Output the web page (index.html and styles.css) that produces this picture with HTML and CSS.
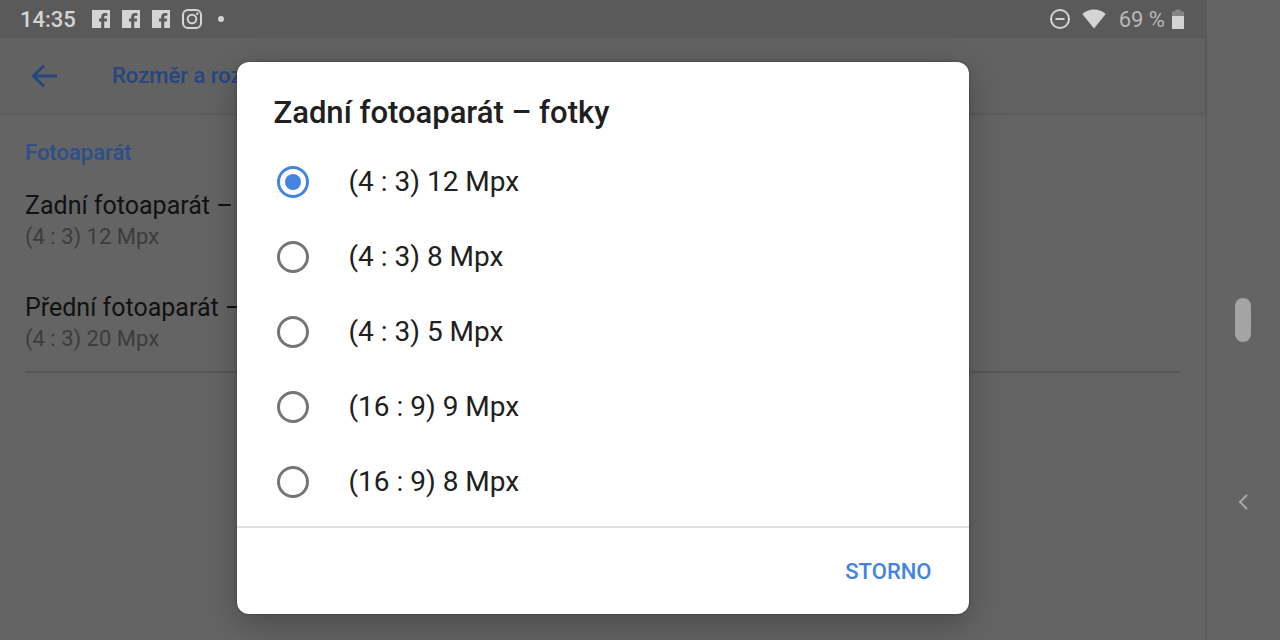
FILE: index.html
```
<!DOCTYPE html>
<html lang="cs">
<head>
    <meta charset="UTF-8">
    <meta name="viewport" content="width=device-width, initial-scale=1.0">
    <title>Rozměr a rozlišení</title>
    <link rel="stylesheet" href="styles.css">
</head>
<body>
    <div class="screen">
        <div class="status-bar">
            <span class="clock">14:35</span>
            <div class="notifications">
                <svg class="icon-fb" viewBox="0 0 18 18"><path d="M0 0h18v18h-5.800v-6.600h2.600l.4-2.800h-3V7.200c0-.9.500-1.400 1.500-1.400h1.700V3.200c-.5-.1-1.300-.2-2.200-.2-2.500 0-4 1.300-4 3.800v1.800H7v2.800h2.200V18H0z"/></svg>
                <svg class="icon-fb" viewBox="0 0 18 18"><path d="M0 0h18v18h-5.800v-6.600h2.600l.4-2.800h-3V7.200c0-.9.500-1.400 1.500-1.400h1.700V3.200c-.5-.1-1.300-.2-2.200-.2-2.500 0-4 1.300-4 3.800v1.800H7v2.800h2.200V18H0z"/></svg>
                <svg class="icon-fb" viewBox="0 0 18 18"><path d="M0 0h18v18h-5.800v-6.600h2.600l.4-2.800h-3V7.200c0-.9.500-1.400 1.500-1.400h1.700V3.200c-.5-.1-1.300-.2-2.200-.2-2.500 0-4 1.300-4 3.800v1.800H7v2.800h2.200V18H0z"/></svg>
                <svg class="icon-ig" viewBox="0 0 20 20"><rect x="1" y="1" width="18" height="18" rx="5"/><circle cx="10" cy="10" r="4.300"/><circle class="dot" cx="15.200" cy="4.800" r="1.200"/></svg>
                <span class="more-dot"></span>
            </div>
            <div class="system-icons">
                <svg class="icon-dnd" viewBox="0 0 20 20"><circle cx="10" cy="10" r="9"/><path d="M5.500 10h9"/></svg>
                <svg class="icon-wifi" viewBox="0 0 24 20"><path d="M12 19.500.300 5C3.500 2.200 7.500.600 12 .600S20.500 2.200 23.700 5z"/></svg>
                <span class="battery-level">69 %</span>
                <svg class="icon-battery" viewBox="0 0 12 20"><path class="empty" d="M0 7V2.500h3.300V.500h5.400v2H12V7z"/><path d="M0 7h12v13H0z"/></svg>
            </div>
        </div>

        <header class="app-bar">
            <button class="back-button" aria-label="Zpět">
                <svg viewBox="0 0 28 24"><path d="M27 12H3M14 1.500 3.500 12 14 22.500"/></svg>
            </button>
            <h1>Rozměr a rozlišení</h1>
        </header>

        <main class="settings">
            <h2>Fotoaparát</h2>
            <ul class="setting-list">
                <li>
                    <div class="setting-name">Zadní fotoaparát – fotky</div>
                    <div class="setting-value">(4 : 3) 12 Mpx</div>
                </li>
                <li>
                    <div class="setting-name">Přední fotoaparát – fotky</div>
                    <div class="setting-value">(4 : 3) 20 Mpx</div>
                </li>
            </ul>
        </main>

        <div class="overlay">
            <form class="dialog" role="dialog" aria-labelledby="dialog-title">
                <h2 id="dialog-title">Zadní fotoaparát – fotky</h2>
                <div class="options">
                    <label><input type="radio" name="size" checked>(4 : 3) 12 Mpx</label>
                    <label><input type="radio" name="size">(4 : 3) 8 Mpx</label>
                    <label><input type="radio" name="size">(4 : 3) 5 Mpx</label>
                    <label><input type="radio" name="size">(16 : 9) 9 Mpx</label>
                    <label><input type="radio" name="size">(16 : 9) 8 Mpx</label>
                </div>
                <div class="dialog-actions">
                    <button type="button" class="cancel-button">STORNO</button>
                </div>
            </form>
        </div>
    </div>

    <nav class="nav-bar">
        <button class="home-button" aria-label="Domů"><span class="pill"></span></button>
        <button class="nav-back" aria-label="Zpět">
            <svg viewBox="0 0 10 16"><path d="M9 1 2 8l7 7"/></svg>
        </button>
    </nav>
</body>
</html>
```
FILE: styles.css
```
:root {
    --surface: #646464;
    --status: #5a5a5a;
    --line: #575757;
    --status-icon: #d4d4d4;
    --dim-blue: #264680;
    --accent: #4384e0;
}
* {
    box-sizing: border-box;
}
body {
    margin: 0;
    min-height: 100vh;
    display: grid;
    grid-template-columns: 1fr 75px;
    font-family: Roboto, "Liberation Sans", sans-serif;
    background-color: var(--surface);
    color: #111;
}
h1, h2, ul {
    margin: 0;
    padding: 0;
}
button {
    padding: 0;
    border: none;
    background: none;
    font-family: inherit;
    cursor: pointer;
}
svg {
    display: block;
    fill: none;
}
.screen {
    position: relative;
    min-width: 0;
}

/* Status bar */
.status-bar {
    display: flex;
    align-items: center;
    height: 38px;
    padding: 0 21px 0 20px;
    background-color: var(--status);
    color: var(--status-icon);
}
.clock {
    font-size: 22px;
    font-weight: 500;
}
.notifications {
    display: flex;
    align-items: center;
    gap: 12px;
    margin-left: 16px;
}
.icon-fb {
    width: 18px;
    height: 18px;
    fill: var(--status-icon);
}
.icon-ig {
    width: 20px;
    height: 20px;
    stroke: var(--status-icon);
    stroke-width: 2;
}
.icon-ig .dot {
    fill: var(--status-icon);
    stroke: none;
}
.more-dot {
    width: 6px;
    height: 6px;
    margin-left: 4px;
    border-radius: 50%;
    background-color: var(--status-icon);
}
.system-icons {
    display: flex;
    align-items: center;
    margin-left: auto;
}
.icon-dnd {
    width: 20px;
    height: 20px;
    stroke: var(--status-icon);
    stroke-width: 2;
}
.icon-wifi {
    width: 24px;
    height: 20px;
    margin: 0 13px 0 12px;
    fill: var(--status-icon);
}
.battery-level {
    margin-right: 7px;
    font-size: 22px;
    color: #b8b8b8;
}
.icon-battery {
    width: 12px;
    height: 20px;
    fill: var(--status-icon);
}
.icon-battery .empty {
    fill: #858585;
}

/* App bar */
.app-bar {
    display: flex;
    align-items: center;
    height: 75px;
    padding-left: 30px;
    background-color: #626262;
    box-shadow: 0 1px 3px rgba(0, 0, 0, 0.15);
    color: var(--dim-blue);
}
.app-bar h1 {
    margin-left: 54px;
    font-size: 22px;
    font-weight: 500;
}
.back-button svg {
    width: 28px;
    height: 24px;
    stroke: var(--dim-blue);
    stroke-width: 3;
}

/* Settings */
.settings {
    padding: 26px 25px 0;
}
.settings h2 {
    font-size: 22px;
    line-height: 28px;
    font-weight: 500;
    color: #2c4f8c;
}
.setting-list {
    list-style: none;
    border-bottom: 2px solid var(--line);
}
.setting-list li {
    padding: 22px 0 18px;
}
.setting-name {
    font-size: 25px;
    line-height: 34px;
}
.setting-value {
    font-size: 22px;
    line-height: 28px;
    color: #3c3c3c;
}

/* Dialog */
.overlay {
    position: absolute;
    inset: 36px 0 0;
    display: flex;
    align-items: center;
    justify-content: center;
}
.dialog {
    width: 732px;
    max-width: 90%;
    border-radius: 12px;
    background-color: #fff;
    box-shadow: 0 10px 32px rgba(0, 0, 0, 0.25), 0 0 3px rgba(0, 0, 0, 0.3);
    color: #202020;
}
.dialog h2 {
    padding: 31px 37px 11px;
    font-size: 31px;
    line-height: 40px;
    font-weight: 500;
}
.options {
    padding-bottom: 7px;
    border-bottom: 2px solid #e0e0e0;
}
.options label {
    display: flex;
    align-items: center;
    height: 75px;
    padding-left: 40px;
    font-size: 28px;
    cursor: pointer;
}
.options input {
    appearance: none;
    width: 32px;
    height: 32px;
    margin: 0 40px 0 0;
    padding: 5px;
    border: 3px solid #757575;
    border-radius: 50%;
    background-clip: content-box;
}
.options input:checked {
    border-color: var(--accent);
    background-color: var(--accent);
}
.dialog-actions {
    display: flex;
    justify-content: flex-end;
    padding: 25px 37px 23px;
}
.cancel-button {
    font-size: 22px;
    line-height: 38px;
    font-weight: 500;
    color: var(--accent);
}

/* Navigation bar */
.nav-bar {
    display: grid;
    grid-template-rows: 1fr 1fr 1fr;
    place-items: center;
    padding: 47px 2px 47px 0;
    border-left: 2px solid var(--status);
}
.home-button {
    grid-row: 2;
}
.nav-back {
    grid-row: 3;
}
.pill {
    display: block;
    width: 16px;
    height: 44px;
    border-radius: 8px;
    background-color: #a4a4a4;
}
.nav-back svg {
    width: 10px;
    height: 16px;
    stroke: #a8a8a8;
    stroke-width: 2;
}
```
